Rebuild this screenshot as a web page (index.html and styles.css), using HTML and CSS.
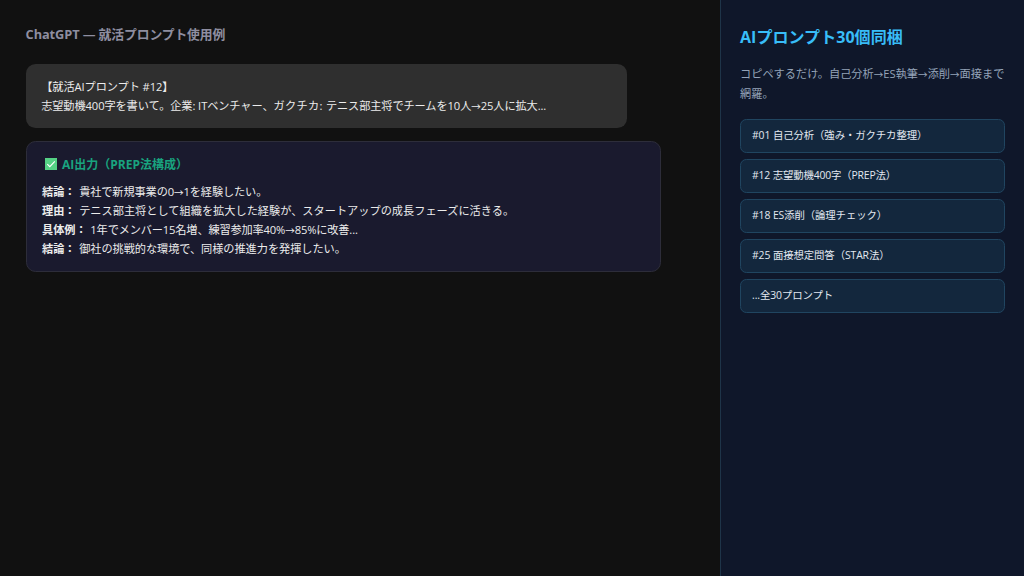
FILE: index.html
```
<!DOCTYPE html>
<html lang="ja">
<head>
    <meta charset="UTF-8">
    <meta name="viewport" content="width=device-width, initial-scale=1.0">
    <title>ChatGPT — 就活プロンプト使用例</title>
    <link rel="stylesheet" href="styles.css">
</head>
<body>
    <main class="chat">
        <h1 class="chat-title">ChatGPT — 就活プロンプト使用例</h1>
        <div class="prompt">
            <p class="prompt-name">【就活AIプロンプト #12】</p>
            <p class="prompt-text">志望動機400字を書いて。企業: ITベンチャー、<span class="wide">ガクチカ: </span>テニス部主将でチームを10人<span class="arrow">→</span>25人に拡大...</p>
        </div>
        <div class="answer">
            <h2 class="answer-title">
                <svg class="check" viewBox="0 0 12 12">
                    <rect width="12" height="12" fill="#55d185"/>
                    <path d="M2.3 6.2 4.8 8.7 9.8 3.4" fill="none" stroke="#fff" stroke-width="1.1"/>
                </svg>
                <span>AI出力（PREP法構成）</span>
            </h2>
            <p class="point"><b>結論：</b><span class="line-1">貴社で新規事業の0<span class="arrow">→</span>1を経験したい。</span></p>
            <p class="point"><b>理由：</b><span class="line-2">テニス部主将として組織を拡大した経験が、スタートアップの成長フェーズに活きる。</span></p>
            <p class="point"><b>具体例：</b><span class="line-3">1年でメンバー15名増、練習参加率40%<span class="arrow">→</span>85%に改善...</span></p>
            <p class="point"><b>結論：</b><span class="line-4">御社の挑戦的な環境で、同様の推進力を発揮したい。</span></p>
        </div>
    </main>
    <aside class="side">
        <h2 class="side-title">AIプロンプト30個同梱</h2>
        <p class="side-text">コピペするだけ。自己分析<span class="arrow">→</span>ES執筆<span class="arrow">→</span>添削<span class="arrow">→</span>面接まで<br>網羅。</p>
        <ul class="list">
            <li class="item">#01 自己分析（強み・ガクチカ整理）</li>
            <li class="item item-tight">#12 志望動機400字（PREP法）</li>
            <li class="item">#18 ES添削（論理チェック）</li>
            <li class="item">#25 面接想定問答（STAR法）</li>
            <li class="item">...全30プロンプト</li>
        </ul>
    </aside>
</body>
</html>
```
FILE: styles.css
```
* {
    box-sizing: border-box;
    margin: 0;
    padding: 0;
}

body {
    display: flex;
    width: 1024px;
    height: 576px;
    overflow: hidden;
    font-family: "Open Sans", "Noto Sans CJK JP", sans-serif;
    font-size: 11.2px;
    background: #111;
    color: #ececec;
    white-space: nowrap;
}

/* 矢印は本文より少し小さく */
.arrow {
    font-size: 9.6px;
    line-height: 0;
}

.chat {
    width: 720px;
    padding: 25px 25.6px;
}

.chat-title {
    height: 19px;
    margin-bottom: 20px;
    font-size: 12.8px;
    line-height: 19px;
    letter-spacing: -0.1px;
    color: #8e8ea0;
}

.prompt {
    width: 601.6px;
    height: 64px;
    margin-bottom: 12.8px;
    padding: 13px 15.6px;
    border-radius: 9.6px;
    background: #2f2f2f;
    line-height: 19px;
}

.prompt-name {
    letter-spacing: -0.08px;
}

.prompt-text {
    letter-spacing: -0.1px;
}

.wide {
    letter-spacing: 0.3px;
}

.answer {
    width: 95%;
    height: 131px;
    padding: 12px 15.4px;
    border: 1px solid #2d2d3a;
    border-radius: 9.6px;
    background: #1a1a2e;
}

.answer-title {
    display: flex;
    align-items: center;
    gap: 5px;
    height: 20px;
    margin-bottom: 8px;
    padding-left: 3px;
    font-size: 12px;
    color: #19a37f;
}

.check {
    width: 12px;
    height: 12px;
}

.point {
    display: flex;
    gap: 3.6px;
    line-height: 19.1px;
}

.line-1 {
    letter-spacing: -0.12px;
}

.line-3 {
    letter-spacing: -0.15px;
}

.line-4 {
    letter-spacing: -0.06px;
}

.side {
    width: 304px;
    padding: 25px 19px;
    border-left: 1px solid #1e3448;
    background: #0f172a;
}

.side-title {
    height: 24px;
    margin-bottom: 15px;
    font-size: 16px;
    line-height: 24px;
    letter-spacing: 0.05px;
    color: #38bdf8;
}

.side-text {
    margin-bottom: 15px;
    line-height: 20px;
    letter-spacing: 0;
    color: #94a3b8;
}

.list {
    display: flex;
    flex-direction: column;
    gap: 6px;
    list-style: none;
}

.item {
    height: 34px;
    padding: 0 11px;
    border: 1px solid #204560;
    border-radius: 6.4px;
    background: #13273d;
    font-size: 10.4px;
    line-height: 31px;
    letter-spacing: -0.1px;
    color: #e2e8f0;
}

.item-tight {
    letter-spacing: -0.15px;
}
```
